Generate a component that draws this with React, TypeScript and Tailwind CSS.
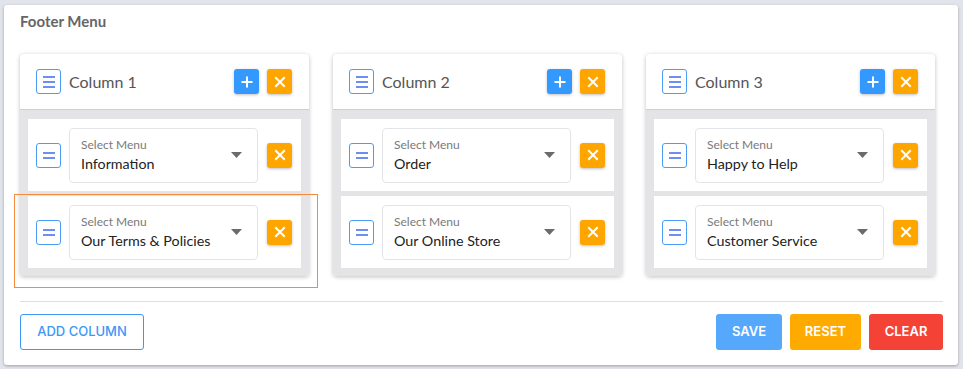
import React from "react";

const columns = [
  { title: "Column 1", items: ["Information", "Our Terms & Policies"] },
  { title: "Column 2", items: ["Order", "Our Online Store"] },
  { title: "Column 3", items: ["Happy to Help", "Customer Service"] },
];

function DragBox({ lines }: { lines: number }) {
  return (
    <div className="flex h-[25px] w-[25px] shrink-0 flex-col items-center justify-center gap-[3px] rounded-[3px] border border-[#4a9cf5] bg-white">
      {Array.from({ length: lines }).map((_, i) => (
        <span key={i} className="block h-[2px] w-[12px] bg-[#6d8ff2]" />
      ))}
    </div>
  );
}

function IconBtn({ kind }: { kind: "plus" | "close" }) {
  const bg = kind === "plus" ? "bg-[#3399ff]" : "bg-[#ffa500]";
  return (
    <button className={`flex h-[25px] w-[25px] items-center justify-center rounded-[3px] ${bg} shadow-[0_1px_3px_rgba(0,0,0,0.25)]`}>
      <svg width="12" height="12" viewBox="0 0 12 12" stroke="white" strokeWidth="2" strokeLinecap="square">
        {kind === "plus" ? (
          <path d="M6 1.5v9M1.5 6h9" />
        ) : (
          <path d="M2 2l8 8M10 2l-8 8" />
        )}
      </svg>
    </button>
  );
}

function MenuRow({ value }: { value: string }) {
  return (
    <div className="flex h-[72px] items-center bg-white pl-[8px] pr-[9px]">
      <DragBox lines={2} />
      <div className="ml-[8px] flex h-[55px] w-[189px] items-center justify-between rounded-[4px] border border-[#e2e4e8] pl-[11px] pr-[15px]">
        <div className="flex flex-col">
          <span className="text-[12px] leading-[14px] text-[#7a7a7a]">Select Menu</span>
          <span className="mt-[3px] text-[14.3px] leading-[17px] text-[#222]">{value}</span>
        </div>
        <svg width="11" height="6" viewBox="0 0 11 6">
          <path d="M0 0h11L5.5 6z" fill="#6b6b6b" />
        </svg>
      </div>
      <div className="ml-[9px]">
        <IconBtn kind="close" />
      </div>
    </div>
  );
}

function ColumnCard({ title, items }: { title: string; items: string[] }) {
  return (
    <div className="w-[289px] overflow-hidden rounded-[4px] bg-white shadow-[0_1px_4px_rgba(0,0,0,0.25)]">
      <div className="flex h-[56px] items-center border-b border-[#cfcfcf] px-[16px]">
        <DragBox lines={3} />
        <span className="ml-[8px] text-[16px] text-[#555]">{title}</span>
        <div className="ml-auto flex gap-[8px] pr-[1px]">
          <IconBtn kind="plus" />
          <IconBtn kind="close" />
        </div>
      </div>
      <div className="flex flex-col gap-[5px] bg-[#e4e4e6] px-[8px] pb-[8px] pt-[9px]">
        {items.map((it) => (
          <MenuRow key={it} value={it} />
        ))}
      </div>
    </div>
  );
}

export default function App() {
  return (
    <div className="h-[369px] w-[963px] bg-[#e1e4ea] pl-[4px] pt-[5px] font-['Lato','Noto_Sans',sans-serif]">
      <div className="relative h-[360px] w-[954px] rounded-[3px] bg-white px-[16px] shadow-[0_1px_3px_rgba(0,0,0,0.3)]">
        <h2 className="pt-[7px] text-[15px] font-bold leading-[18px] text-[#666]">Footer Menu</h2>
        <div className="mt-[24px] flex gap-[24px]">
          {columns.map((c) => (
            <ColumnCard key={c.title} title={c.title} items={c.items} />
          ))}
        </div>
        <div className="mt-[25px] w-[923px] border-t border-[#dedede]" />
        <div className="mt-[12px] flex w-[923px] items-center font-['Inter',sans-serif] text-[13px] font-medium">
          <button className="h-[36px] w-[124px] rounded-[3px] border border-[#3d98f5] text-[#3d98f5]">ADD COLUMN</button>
          <div className="ml-auto flex gap-[8px]">
            <button className="h-[36px] w-[66px] rounded-[3px] bg-[#55a8fc] font-semibold text-white">SAVE</button>
            <button className="h-[36px] w-[71px] rounded-[3px] bg-[#ffaa00] font-semibold text-white">RESET</button>
            <button className="h-[36px] w-[74px] rounded-[3px] bg-[#f44336] font-semibold text-white">CLEAR</button>
          </div>
        </div>
        <div className="pointer-events-none absolute left-[10px] top-[189px] h-[94px] w-[304px] border border-[#f58a3c]" />
      </div>
    </div>
  );
}
